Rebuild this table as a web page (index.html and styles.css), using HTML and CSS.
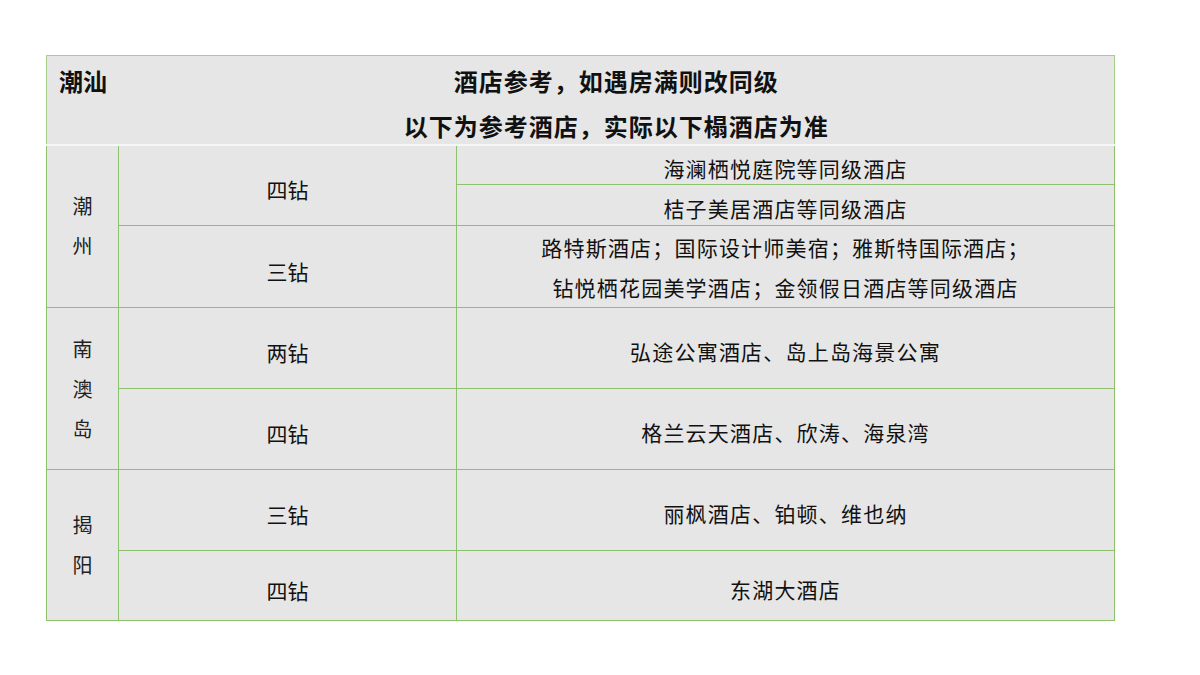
FILE: index.html
```html
<!DOCTYPE html>
<html lang="zh">
<head>
<meta charset="utf-8">
<link rel="stylesheet" href="styles.css">
</head>
<body>
<table class="hotels">
  <colgroup>
    <col class="c-area">
    <col class="c-level">
    <col class="c-name">
  </colgroup>
  <tr class="head">
    <td class="region">潮汕</td>
    <td class="title" colspan="2">
      <div class="t1">酒店参考，如遇房满则改同级</div>
      <div class="t2">以下为参考酒店，实际以下榻酒店为准</div>
    </td>
  </tr>
  <tr class="h40">
    <td class="area" rowspan="3">潮<br>州</td>
    <td class="level" rowspan="2">四钻</td>
    <td class="name">海澜栖悦庭院等同级酒店</td>
  </tr>
  <tr class="h41">
    <td class="name">桔子美居酒店等同级酒店</td>
  </tr>
  <tr class="h81">
    <td class="level">三钻</td>
    <td class="name multi">路特斯酒店；国际设计师美宿；雅斯特国际酒店；<br>钻悦栖花园美学酒店；金领假日酒店等同级酒店</td>
  </tr>
  <tr class="h81">
    <td class="area" rowspan="2">南<br>澳<br>岛</td>
    <td class="level">两钻</td>
    <td class="name">弘途公寓酒店、岛上岛海景公寓</td>
  </tr>
  <tr class="h81">
    <td class="level">四钻</td>
    <td class="name">格兰云天酒店、欣涛、海泉湾</td>
  </tr>
  <tr class="h81">
    <td class="area" rowspan="2">揭<br>阳</td>
    <td class="level">三钻</td>
    <td class="name">丽枫酒店、铂顿、维也纳</td>
  </tr>
  <tr class="h70">
    <td class="level">四钻</td>
    <td class="name">东湖大酒店</td>
  </tr>
</table>
</body>
</html>
```
FILE: styles.css
```css
html, body {
  margin: 0;
  padding: 0;
  background: #ffffff;
}

body {
  padding: 55px 0 0 46px;
  font-family: "Noto Sans CJK SC", "Noto Sans", sans-serif;
  color: #111;
}

.hotels {
  border-collapse: collapse;
  table-layout: fixed;
  width: 1068px;
  background: #e6e6e6;
  border: 1px solid #a6cf8c;
}

.c-area { width: 72px; }
.c-level { width: 338px; }
.c-name { width: 658px; }

.hotels td {
  border: 1px solid #8ec16e;
  padding: 0;
  text-align: center;
  vertical-align: middle;
}

.head {
  height: 89px;
}

.head td {
  border: none;
  border-bottom: 2px solid #f6f6f6;
  vertical-align: top;
}

.head .region {
  text-align: left;
  padding: 10px 0 0 12px;
  font-weight: 700;
  font-size: 24px;
  line-height: 30px;
}

.head .title {
  padding-top: 10px;
  font-weight: 700;
  font-size: 24px;
  line-height: 30px;
  letter-spacing: 1px;
}

.head .t2 {
  margin-top: 15px;
}

.h40 { height: 40px; }
.h41 { height: 41px; }
.h81 { height: 81px; }
.h70 { height: 70px; }

.area {
  font-weight: 400;
  font-size: 20px;
  line-height: 40px;
  color: #222;
}

.level {
  font-size: 21px;
  line-height: 26px;
  padding-top: 8px !important;
}

.name {
  font-size: 21px;
  line-height: 26px;
  padding-top: 6px !important;
  letter-spacing: 1.2px;
}

.name.multi {
  line-height: 40px;
  padding-top: 1px !important;
}
```
